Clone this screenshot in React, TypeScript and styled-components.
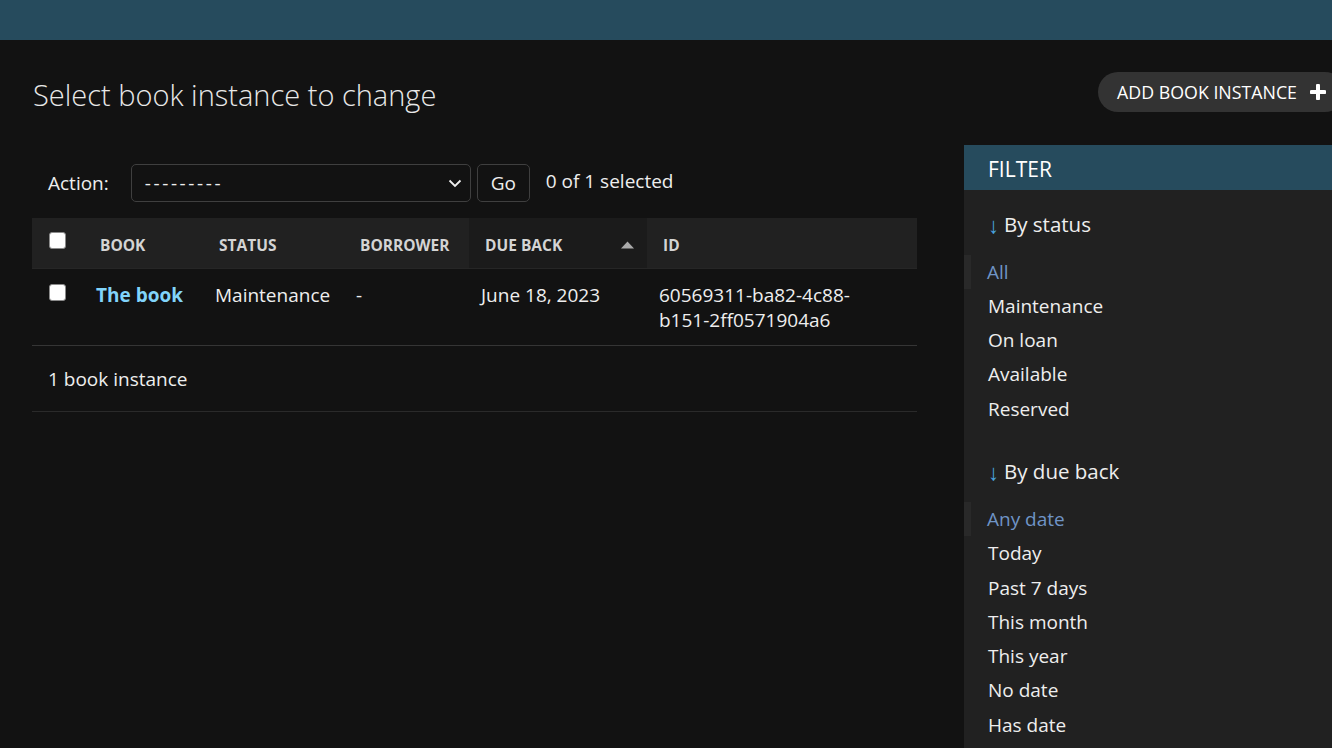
import React from "react";
import styled, { createGlobalStyle } from "styled-components";

const GlobalStyle = createGlobalStyle`
  html, body { margin: 0; padding: 0; background: #121212; }
  body {
    font-family: "Open Sans", "Noto Sans", sans-serif;
    color: #eeeeee;
    overflow: hidden;
    width: 1332px;
    height: 748px;
  }
  * { box-sizing: border-box; }
`;

const Header = styled.header`
  height: 40px;
  background: #264b5d;
`;

const Content = styled.main`
  width: 1345px;
  padding: 32px 0 0 32px;
`;

const TitleRow = styled.div`
  display: flex;
  justify-content: space-between;
  align-items: flex-start;
  margin-bottom: 29px;
`;

const Title = styled.h1`
  margin: 4px 0 0 1px;
  height: 40px;
  font-size: 29px;
  font-weight: 300;
  line-height: 38px;
  color: #e8e8e8;
`;

const AddButton = styled.a`
  height: 40px;
  padding: 0 19px;
  border-radius: 20px;
  background: #333333;
  display: flex;
  align-items: center;
  gap: 13px;
  color: #ffffff;
  font-size: 17.8px;
  text-transform: uppercase;
  text-decoration: none;
`;

const ChangeList = styled.div`
  display: flex;
  gap: 47px;
  align-items: stretch;
`;

const Results = styled.section`
  width: 885px;
  padding-top: 19px;
`;

const Actions = styled.div`
  display: flex;
  align-items: center;
  height: 38px;
  padding-left: 16px;
  font-size: 19px;
`;

const ActionLabel = styled.label`
  margin-right: 22px;
  color: #eeeeee;
`;

const SelectBox = styled.div`
  width: 340px;
  height: 38px;
  border: 1px solid #3f3f3f;
  border-radius: 5px;
  padding: 0 8px 0 13px;
  display: flex;
  align-items: center;
  justify-content: space-between;
  color: #eeeeee;
`;

const Placeholder = styled.span`
  letter-spacing: 2.6px;
`;

const GoButton = styled.button`
  margin-left: 6px;
  width: 53px;
  height: 38px;
  border: 1px solid #3f3f3f;
  border-radius: 5px;
  background: #121212;
  color: #eeeeee;
  font-family: inherit;
  font-size: 19px;
  padding: 0;
`;

const Counter = styled.span`
  margin-left: 16px;
  margin-top: -4px;
  color: #eeeeee;
`;

const Table = styled.table`
  margin-top: 16px;
  width: 885px;
  border-collapse: collapse;
  table-layout: fixed;
`;

const HeadCell = styled.th<{ $sorted?: boolean }>`
  height: 50px;
  padding: 4px 16px 0;
  background: ${(p) => (p.$sorted ? "#1b1b1b" : "#212121")};
  text-align: left;
  font-size: 15.5px;
  font-weight: 700;
  text-transform: uppercase;
  color: #d4d4d4;
  vertical-align: middle;
  border-bottom: 1px solid #262626;
`;

const CheckHeadCell = styled(HeadCell)`
  padding: 14px 0 0 17px;
  vertical-align: top;
`;

const SortInner = styled.div`
  display: flex;
  align-items: center;
  justify-content: space-between;
  margin-right: -3px;
`;

const Cell = styled.td`
  padding: 14px 12px 12px;
  line-height: 25px;
  font-size: 19px;
  color: #eeeeee;
  vertical-align: top;
  border-bottom: 1px solid #353535;
`;

const IdCell = styled(Cell)`
  padding-right: 24px;
`;

const CheckCell = styled(Cell)`
  padding: 15px 0 0 17px;
`;

const BookLink = styled.a`
  color: #81d4fa;
  font-weight: 700;
  text-decoration: none;
`;

const Checkbox = styled.span`
  display: block;
  width: 17px;
  height: 17px;
  border: 1px solid #8a8a8a;
  border-radius: 3px;
  background: #ffffff;
`;

const Paginator = styled.p`
  margin: 0;
  height: 66px;
  padding: 2px 0 0 16px;
  display: flex;
  align-items: center;
  font-size: 19px;
  border-bottom: 1px solid #2a2a2a;
`;

const FilterPanel = styled.aside`
  width: 381px;
  min-height: 603px;
  background: #212121;
`;

const FilterTitle = styled.h2`
  margin: 0;
  height: 45px;
  padding: 3px 0 0 24px;
  background: #264b5d;
  font-size: 21px;
  font-weight: 400;
  line-height: 42px;
  color: #ffffff;
  text-transform: uppercase;
`;

const FilterSection = styled.div`
  padding: 19px 0 11.5px 24px;
`;

const FilterHeading = styled.h3`
  display: flex;
  align-items: center;
  height: 30px;
  margin: 0 0 15.5px;
  font-size: 20.5px;
  font-weight: 400;
  line-height: 30px;
  color: #eeeeee;
`;

const Arrow = styled.span`
  color: #4aa3df;
  margin-right: 5px;
  font-size: 22px;
  line-height: 30px;
`;

const FilterList = styled.ul`
  list-style: none;
  margin: 0;
  padding: 0;
`;

const FilterItem = styled.li<{ $selected?: boolean }>`
  font-size: 19px;
  line-height: 34.3px;
  color: ${(p) => (p.$selected ? "#6f94c6" : "#eeeeee")};
  ${(p) =>
    p.$selected
      ? `border-left: 7px solid #292929; margin-left: -24px; padding-left: 16px;`
      : ""}
`;

const PlusIcon = () => (
  <svg width="16" height="16" viewBox="0 0 16 16">
    <path d="M8 1.5v13M1.5 8h13" stroke="#ffffff" strokeWidth="4" strokeLinecap="round" />
  </svg>
);

const Chevron = () => (
  <svg width="14" height="10" viewBox="0 0 14 10">
    <polyline points="1.5,2.5 7,8 12.5,2.5" fill="none" stroke="#eeeeee" strokeWidth="1.8" />
  </svg>
);

const SortUp = () => (
  <svg width="13" height="8" viewBox="0 0 13 8">
    <polygon points="6.5,0.5 13,7.5 0,7.5" fill="#aaaaaa" />
  </svg>
);

const statusFilters = ["All", "Maintenance", "On loan", "Available", "Reserved"];
const dateFilters = ["Any date", "Today", "Past 7 days", "This month", "This year", "No date", "Has date"];

export default function App() {
  return (
    <>
      <GlobalStyle />
      <Header />
      <Content>
        <TitleRow>
          <Title>Select book instance to change</Title>
          <AddButton href="#">
            Add book instance
            <PlusIcon />
          </AddButton>
        </TitleRow>
        <ChangeList>
          <Results>
            <Actions>
              <ActionLabel>Action:</ActionLabel>
              <SelectBox>
                <Placeholder>---------</Placeholder>
                <Chevron />
              </SelectBox>
              <GoButton>Go</GoButton>
              <Counter>0 of 1 selected</Counter>
            </Actions>
            <Table>
              <colgroup>
                <col style={{ width: 52 }} />
                <col style={{ width: 119 }} />
                <col style={{ width: 141 }} />
                <col style={{ width: 125 }} />
                <col style={{ width: 178 }} />
                <col style={{ width: 270 }} />
              </colgroup>
              <thead>
                <tr>
                  <CheckHeadCell>
                    <Checkbox />
                  </CheckHeadCell>
                  <HeadCell>Book</HeadCell>
                  <HeadCell>Status</HeadCell>
                  <HeadCell>Borrower</HeadCell>
                  <HeadCell $sorted>
                    <SortInner>
                      <span>Due back</span>
                      <SortUp />
                    </SortInner>
                  </HeadCell>
                  <HeadCell>ID</HeadCell>
                </tr>
              </thead>
              <tbody>
                <tr>
                  <CheckCell>
                    <Checkbox />
                  </CheckCell>
                  <Cell>
                    <BookLink href="#">The book</BookLink>
                  </Cell>
                  <Cell>Maintenance</Cell>
                  <Cell>-</Cell>
                  <Cell>June 18, 2023</Cell>
                  <IdCell>60569311-ba82-4c88-b151-2ff0571904a6</IdCell>
                </tr>
              </tbody>
            </Table>
            <Paginator>1 book instance</Paginator>
          </Results>
          <FilterPanel>
            <FilterTitle>Filter</FilterTitle>
            <FilterSection>
              <FilterHeading>
                <Arrow>↓</Arrow>
                <span>By status</span>
              </FilterHeading>
              <FilterList>
                {statusFilters.map((f, i) => (
                  <FilterItem key={f} $selected={i === 0}>
                    {f}
                  </FilterItem>
                ))}
              </FilterList>
            </FilterSection>
            <FilterSection>
              <FilterHeading>
                <Arrow>↓</Arrow>
                <span>By due back</span>
              </FilterHeading>
              <FilterList>
                {dateFilters.map((f, i) => (
                  <FilterItem key={f} $selected={i === 0}>
                    {f}
                  </FilterItem>
                ))}
              </FilterList>
            </FilterSection>
          </FilterPanel>
        </ChangeList>
      </Content>
    </>
  );
}
